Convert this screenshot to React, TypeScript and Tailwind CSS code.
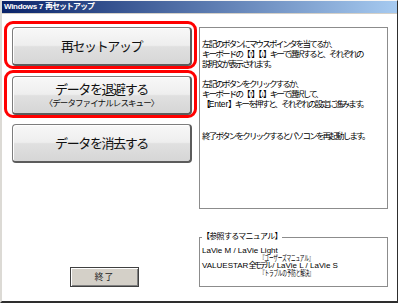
import React from 'react';

const font = "font-['Liberation_Sans','Noto_Sans_CJK_JP',sans-serif]";

const btn =
  'w-[180px] h-[39px] rounded-[4px] border border-[#7d7d7d] border-r-2 border-b-2 border-r-[#5c5c5c] border-b-[#5c5c5c] bg-[linear-gradient(to_bottom,#f8f8f8_0%,#eeeeee_48%,#e0e0e0_52%,#d6d6d6_100%)] shadow-[inset_1px_1px_0_#ffffff] flex flex-col items-center justify-center text-[#111]';

const MenuButton: React.FC<{ label: string; sub?: string }> = ({ label, sub }) => (
  <div className={btn}>
    <span className="text-[13px] leading-[15px] tracking-[-1.4px]">{label}</span>
    {sub && <span className="text-[8.5px] leading-[11px] tracking-[-0.9px] mt-[1px]">{sub}</span>}
  </div>
);

// red annotation frame around a button
const Frame: React.FC<{ red?: boolean; children: React.ReactNode }> = ({ red, children }) => (
  <div
    className={`w-[193px] h-[48px] rounded-[9px] border-[3px] pt-[3px] pl-[5px] ${
      red ? 'border-[#ff0000]' : 'border-transparent'
    }`}
  >
    {children}
  </div>
);

export default function App() {
  return (
    <div className={`w-[400px] h-[303px] bg-white ${font}`}>
      <div className="w-[398px] h-[303px] flex flex-col border-t border-t-[#f4f4f4] border-l-2 border-l-[#dcdad5] border-r border-r-[#2e2e2e] border-b-2 border-b-[#2e2e2e]">
        {/* title bar */}
        <div className="h-[12px] bg-[linear-gradient(to_right,#0a246a,#a6caf0)] flex items-center pl-[2px] text-white font-bold text-[8px] leading-[12px]">
          <span className="tracking-[-0.3px]">Windows 7&nbsp;</span>
          <span className="tracking-[-1px]">再セットアップ</span>
        </div>
        <div className="h-[1px] bg-[#d4d0c8]" />

        <div className="flex-1 flex">
          {/* left column */}
          <div className="w-[197px] pl-[2px] pt-[7px] flex flex-col">
            <Frame red>
              <MenuButton label="再セットアップ" />
            </Frame>
            <div className="mt-[1px]">
              <Frame red>
                <MenuButton label="データを退避する" sub="〈データファイナルレスキュー〉" />
              </Frame>
            </div>
            <Frame>
              <MenuButton label="データを消去する" />
            </Frame>

            <button className="mt-auto mb-[14px] ml-[66px] w-[69px] h-[20px] bg-[#d4d0c8] border border-[#404040] shadow-[inset_1px_1px_0_#ffffff,inset_-1px_-1px_0_#808080] text-[9px] leading-[18px] tracking-[1px] text-[#222]">
              終了
            </button>
          </div>

          {/* right column */}
          <div className="w-[189px] pt-[13px] flex flex-col">
            <div className="h-[182px] border border-[#8c8c8c] pl-[2px] pt-[11px] text-[8.5px] leading-[10px] tracking-[-1.8px] text-black">
              <p>
                左記のボタンにマウスポインタを当てるか、
                <br />
                キーボードの【↑】【↓】キーで選択すると、それぞれの
                <br />
                説明文が表示されます。
              </p>
              <p className="mt-[10px]">
                左記のボタンをクリックするか、
                <br />
                キーボードの【↑】【↓】キーで選択して、
                <br />
                【<span className="tracking-[-0.2px]">Enter</span>】キーを押すと、それぞれの設定に進みます。
              </p>
              <p className="mt-[22px]">終了ボタンをクリックするとパソコンを再起動します。</p>
            </div>

            <fieldset className="mt-[23px] h-[55px] border border-[#8c8c8c] pl-[2px] text-black">
              <legend className="text-[8px] leading-[10px] tracking-[-0.7px] px-0">【参照するマニュアル】</legend>
              <div className="pt-[5px] text-[8px] leading-[7.5px]">
                <div>LaVie M / LaVie Light</div>
                <div className="pl-[58px]">
                  <span className="inline-block origin-left scale-x-[0.62] text-[7.5px] tracking-[-0.3px]">『ユーザーズマニュアル』</span>
                </div>
                <div>
                  VALUESTAR<span className="tracking-[-2.6px]">全モデル</span>&nbsp;/ LaVie L / LaVie S
                </div>
                <div className="pl-[58px]">
                  <span className="inline-block origin-left scale-x-[0.62] text-[7.5px] tracking-[-0.3px]">『トラブルの予防と解決』</span>
                </div>
              </div>
            </fieldset>
          </div>
        </div>
      </div>
    </div>
  );
}
